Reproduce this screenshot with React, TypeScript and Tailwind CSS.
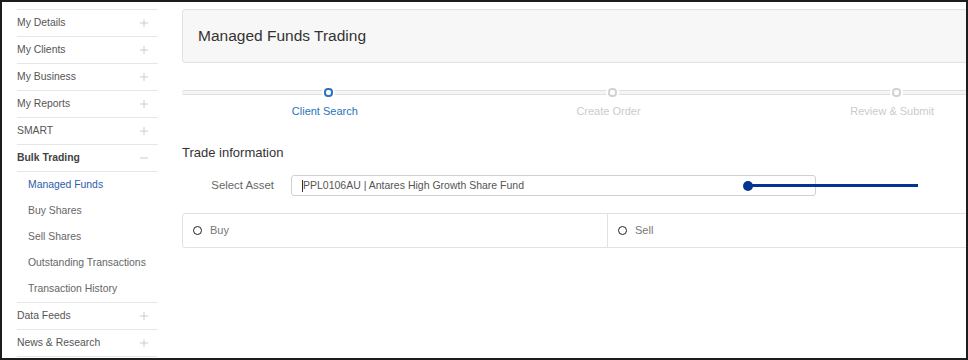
import React from 'react';

type NavItem = { label: string; open?: boolean; children?: string[] };

const NAV: NavItem[] = [
  { label: 'My Details' },
  { label: 'My Clients' },
  { label: 'My Business' },
  { label: 'My Reports' },
  { label: 'SMART' },
  {
    label: 'Bulk Trading',
    open: true,
    children: ['Managed Funds', 'Buy Shares', 'Sell Shares', 'Outstanding Transactions', 'Transaction History'],
  },
  { label: 'Data Feeds' },
  { label: 'News & Research' },
];

const STEPS = ['Client Search', 'Create Order', 'Review & Submit'];

const PlusMinus = ({ open }: { open?: boolean }) => (
  <svg width="8" height="8" viewBox="0 0 8 8" className="mr-[10px]">
    <line x1="0" y1="4" x2="8" y2="4" stroke="#cccccc" strokeWidth="1" />
    {!open && <line x1="4" y1="0" x2="4" y2="8" stroke="#cccccc" strokeWidth="1" />}
  </svg>
);

const Sidebar = () => (
  <aside className="w-[141px] ml-[15px] mt-[7px] shrink-0 self-start border-t border-[#e6e6e6]">
    {NAV.map((item) => (
      <div key={item.label}>
        <div className="h-[27px] border-b border-[#e6e6e6] flex items-center justify-between">
          <span className={`text-[10.4px] ${item.open ? 'font-bold text-[#444]' : 'text-[#555]'}`}>
            {item.label}
          </span>
          <PlusMinus open={item.open} />
        </div>
        {item.open && item.children && (
          <div className="border-b border-[#e6e6e6]">
            {item.children.map((child, i) => (
              <div
                key={child}
                className={`h-[26px] flex items-center pl-[11px] text-[10.4px] ${
                  i === 0 ? 'text-[#2c5ea8]' : 'text-[#666]'
                }`}
              >
                {child}
              </div>
            ))}
          </div>
        )}
      </div>
    ))}
  </aside>
);

const Stepper = () => (
  <div className="mt-[25px]">
    <div className="relative h-[9px]">
      <div className="absolute inset-x-0 top-[2px] h-[5px] rounded-l-full bg-[#f5f5f5] border-y border-[#e0e0e0]" />
      <div className="relative grid grid-cols-3 w-[851px] ml-[5px]">
        {STEPS.map((s, i) => (
          <div key={s} className="flex justify-center">
            <div
              className={`w-[9px] h-[9px] rounded-[4px] border-2 bg-white ring-2 ring-white ${
                i === 0 ? 'border-[#2a74bb]' : 'border-[#d2d2d2]'
              }`}
            />
          </div>
        ))}
      </div>
    </div>
    <div className="grid grid-cols-3 w-[851px] ml-[1px] mt-[7px]">
      {STEPS.map((s, i) => (
        <div
          key={s}
          className={`text-center text-[11px] leading-[14px] ${i === 0 ? 'text-[#2a74bb]' : 'text-[#cbcbcb]'}`}
        >
          {s}
        </div>
      ))}
    </div>
  </div>
);

const Radio = ({ label }: { label: string }) => (
  <div className="flex items-center pl-[10px] gap-[8px]">
    <span className="w-[9px] h-[9px] rounded-full border-[1.5px] border-[#222]" />
    <span className="text-[11px] text-[#777]">{label}</span>
  </div>
);

export default function App() {
  return (
    <div className="w-[968px] h-[360px] border-2 border-[#1c1c1c] bg-white overflow-hidden flex font-['Liberation_Sans',Arial,sans-serif]">
      <Sidebar />
      <main className="ml-[24px] mt-[7px] w-[820px] shrink-0">
        <div className="h-[54px] border border-[#e2e2e2] rounded-[3px] bg-[#f7f7f7] flex items-center pl-[15px]">
          <h1 className="text-[15.5px] text-[#333]">Managed Funds Trading</h1>
        </div>

        <Stepper />

        <h2 className="mt-[27px] text-[13px] leading-[16px] text-[#333]">Trade information</h2>

        <div className="relative mt-[14px] flex items-center">
          <label className="w-[92px] text-right text-[11.4px] text-[#666]">Select Asset</label>
          <div className="ml-[17px] w-[525px] h-[21px] border border-[#d0d0d0] rounded-[3px] flex items-center pl-[10px]">
            <span className="w-px h-[12px] bg-[#333]" />
            <span className="text-[10.5px] text-[#555]">PPL0106AU | Antares High Growth Share Fund</span>
          </div>
          {/* annotation pointer */}
          <span className="absolute left-[561px] top-[6px] w-[10px] h-[10px] rounded-full bg-[#003591]" />
          <span className="absolute left-[566px] top-[9px] w-[170px] h-[3px] bg-[#003591]" />
        </div>

        <div className="mt-[17px] h-[35px] border border-[#e2e2e2] rounded-l-[3px] flex">
          <div className="w-[425px] border-r border-[#e2e2e2] flex items-center">
            <Radio label="Buy" />
          </div>
          <div className="flex-1 flex items-center">
            <Radio label="Sell" />
          </div>
        </div>
      </main>
    </div>
  );
}
